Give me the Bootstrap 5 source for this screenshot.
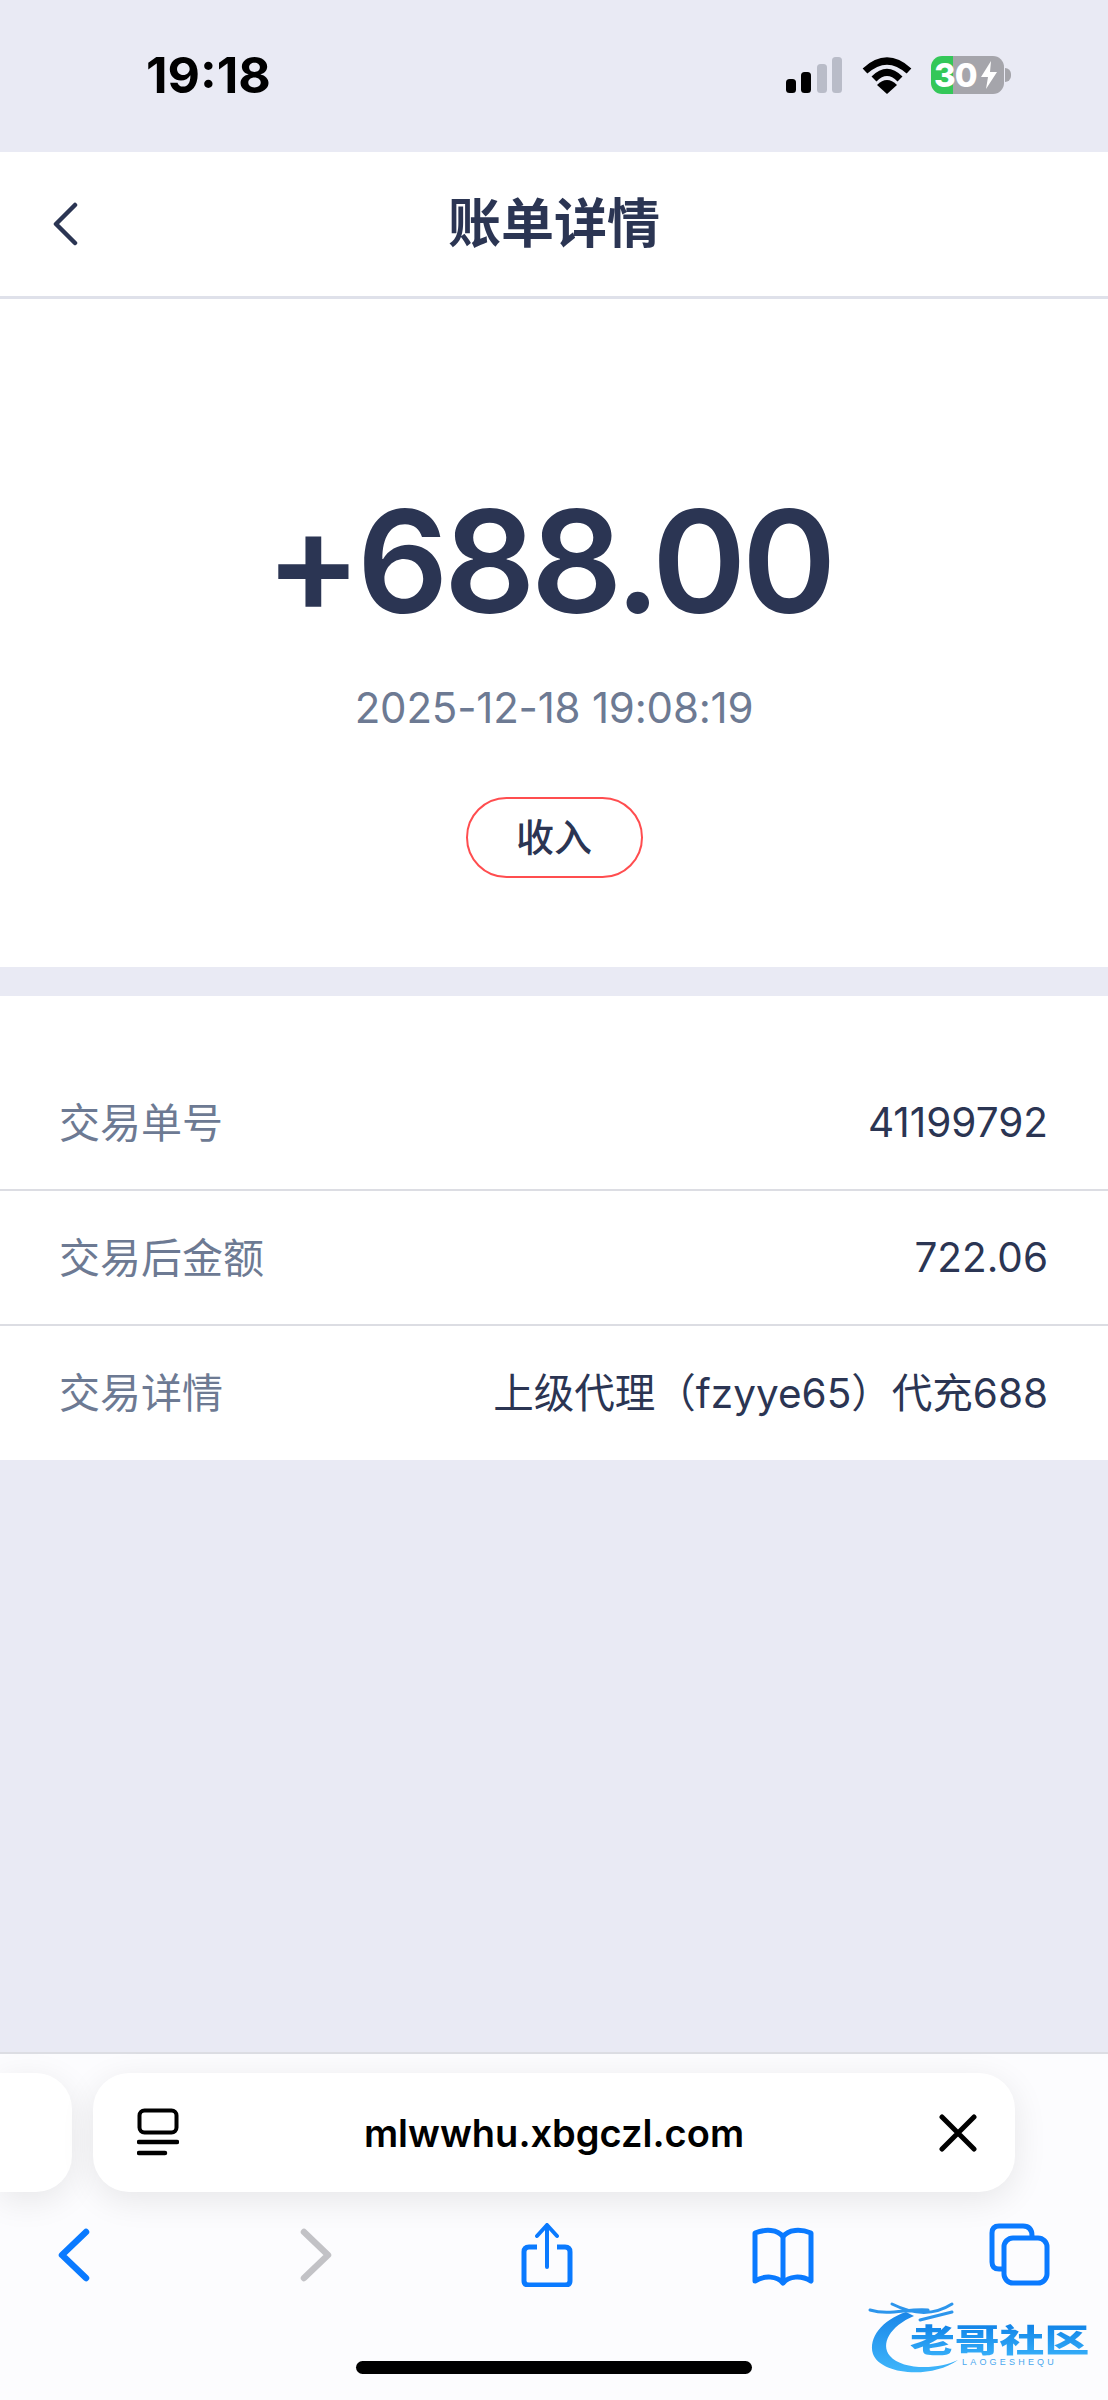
<!DOCTYPE html>
<html lang="zh-CN">
<head>
    <meta charset="UTF-8">
    <meta name="viewport" content="width=device-width, initial-scale=1">
    <title>账单详情</title>
    <link href="https://cdn.jsdelivr.net/npm/bootstrap@5.3.3/dist/css/bootstrap.min.css" rel="stylesheet">
    <style>
        body {
            font-family: Inter, "Noto Sans CJK SC", sans-serif;
            background: #e9eaf4;
            color: #2b3553;
            min-height: 2400px;
        }
        .status-bar { height: 152px; padding: 0 97px 0 146px; }
        .status-time { font-size: 50px; font-weight: 700; color: #000; line-height: 1; margin-top: -2px; }
        .status-icons { gap: 19px; margin-top: -2px; }
        .battery-wrap { width: 80px; height: 38px; }
        .battery-body {
            width: 73px; height: 38px; border-radius: 11px; color: #fff;
            background: linear-gradient(90deg, #34c759 0, #34c759 22px, #a5a5ab 22px);
            font-size: 33px; font-weight: 800; line-height: 38px; padding-left: 3px;
            font-family: Inter, sans-serif; letter-spacing: -1px;
        }
        .battery-nub { width: 6px; height: 14px; background: #a5a5ab; border-radius: 0 6px 6px 0; margin-left: 1px; }
        .page-head { height: 147px; border-bottom: 3px solid #dfe1ea; padding-left: 52px; }
        .page-title { font-size: 53px; font-weight: 700; line-height: 1; margin: 0; }
        .hero { height: 668px; padding-top: 190px; }
        .amount { font-size: 143px; font-weight: 630; line-height: 144px; letter-spacing: -4.5px; padding-right: 11px; }
        .pay-time { font-size: 42px; line-height: 50px; margin-top: 50px; color: #6d7a93; letter-spacing: -.2px; }
        .type-pill {
            width: 177px; height: 81px; margin-top: 64px; border: 2.5px solid #ff4d4f;
            border-radius: 41px; font-size: 38px; font-weight: 500;
        }
        .detail-box { margin-top: 29px; padding-top: 60px; }
        .detail-row { height: 135px; padding: 2px 60px 0 59px; border-bottom: 2px solid #dcdde3; font-size: 41px; }
        .detail-row:last-child { height: 134px; border-bottom: 0; }
        .detail-label { color: #6d7a93; }
        .detail-value { font-size: 40.5px; }
        .safari-bar { background: #fcfcfe; border-top: 2px solid #dcdde3; height: 348px; }
        .tab-strip { gap: 21px; padding-top: 19px; }
        .tab-side { width: 72px; height: 119px; background: #fff; border-radius: 0 36px 36px 0; box-shadow: 0 8px 34px rgba(0, 0, 0, .09); }
        .tab-main { width: 922px; height: 119px; background: #fff; border-radius: 36px; box-shadow: 0 8px 34px rgba(0, 0, 0, .09); padding: 0 38px 0 44px; }
        .tab-url { font-size: 38px; font-weight: 600; color: #000; white-space: nowrap; }
        .tool-row { padding: 31px 57px 0 42px; }
        .home-bar { width: 396px; height: 13px; background: #000; border-radius: 7px; margin: 74px auto 0; }
        .watermark { position: absolute; left: 860px; top: 2290px; width: 240px; height: 90px; }
        .watermark-cn {
            position: absolute; left: 50px; top: 31px; width: max-content; font-size: 32px; line-height: 40px; font-weight: 900;
            white-space: nowrap; transform: scaleX(1.4); transform-origin: left top;
            background: linear-gradient(180deg, #0d7fe6, #3bb4fb); -webkit-background-clip: text; background-clip: text; color: transparent;
        }
        .watermark-en { position: absolute; left: 102px; top: 67px; font-size: 9px; line-height: 10px; letter-spacing: 3.2px; color: #4aa8ee; font-family: "Liberation Sans", sans-serif; white-space: nowrap; }
    </style>
</head>
<body class="position-relative d-flex flex-column">
    <div class="status-bar d-flex justify-content-between align-items-center">
        <div class="status-time">19:18</div>
        <div class="status-icons d-flex align-items-center">
            <svg width="57" height="36" viewBox="0 0 57 36">
                <rect x="0" y="22" width="10" height="14" rx="3.5" fill="#000"/>
                <rect x="15" y="15" width="10" height="21" rx="3.5" fill="#000"/>
                <rect x="31" y="7" width="10" height="29" rx="3.5" fill="#b9bcc8"/>
                <rect x="46" y="0" width="10" height="36" rx="3.5" fill="#b9bcc8"/>
            </svg>
            <svg width="50" height="37" viewBox="0 0 50 37">
                <path d="M3 14 Q25 -6 47 14" fill="none" stroke="#000" stroke-width="7"/>
                <path d="M12 22 Q25 9 38 22" fill="none" stroke="#000" stroke-width="7"/>
                <path d="M15 28 Q25 18 35 28 L25 37 Z" fill="#000"/>
            </svg>
            <div class="battery-wrap d-flex align-items-center">
                <div class="battery-body d-flex align-items-center">
                    <span>30</span>
                    <svg class="ms-1" width="16" height="28" viewBox="0 0 16 28"><path d="M10 0 L0 16 H7 L5 28 L16 11 H9 Z" fill="#fff"/></svg>
                </div>
                <div class="battery-nub"></div>
            </div>
        </div>
    </div>

    <div class="page-head bg-white position-relative d-flex align-items-center">
        <svg width="26" height="44" viewBox="0 0 26 44"><path d="M23 3 L4 22 L23 41" fill="none" stroke="#2b3553" stroke-width="4.5" stroke-linecap="round" stroke-linejoin="round"/></svg>
        <h1 class="page-title position-absolute start-50 translate-middle-x">账单详情</h1>
    </div>

    <div class="hero bg-white d-flex flex-column align-items-center text-center">
        <div class="amount">+688.00</div>
        <div class="pay-time">2025-12-18 19:08:19</div>
        <div class="type-pill d-flex align-items-center justify-content-center">收入</div>
    </div>

    <div class="detail-box bg-white">
        <div class="detail-row d-flex justify-content-between align-items-center">
            <span class="detail-label">交易单号</span><span class="detail-value">41199792</span>
        </div>
        <div class="detail-row d-flex justify-content-between align-items-center">
            <span class="detail-label">交易后金额</span><span class="detail-value">722.06</span>
        </div>
        <div class="detail-row d-flex justify-content-between align-items-center">
            <span class="detail-label">交易详情</span><span class="detail-value">上级代理（fzyye65）代充688</span>
        </div>
    </div>

    <div class="flex-grow-1"></div>

    <div class="safari-bar">
        <div class="tab-strip d-flex">
            <div class="tab-side"></div>
            <div class="tab-main position-relative d-flex justify-content-between align-items-center">
                <svg width="42" height="50" viewBox="0 0 42 50">
                    <rect x="2.5" y="2.5" width="37" height="22" rx="5" fill="none" stroke="#000" stroke-width="4"/>
                    <path d="M2 34 H40 M2 45 H28" stroke="#000" stroke-width="4.5" stroke-linecap="round"/>
                </svg>
                <span class="tab-url position-absolute start-50 top-50 translate-middle">mlwwhu.xbgczl.com</span>
                <svg width="38" height="38" viewBox="0 0 38 38"><path d="M3 3 L35 35 M35 3 L3 35" stroke="#000" stroke-width="5" stroke-linecap="round"/></svg>
            </div>
        </div>
        <div class="tool-row d-flex justify-content-between align-items-start">
            <svg width="64" height="64" viewBox="0 0 64 64"><path d="M44 9 L20 32 L44 55" fill="none" stroke="#0a7aff" stroke-width="6.5" stroke-linecap="round" stroke-linejoin="round"/></svg>
            <svg width="64" height="64" viewBox="0 0 64 64"><path d="M26 9 L50 32 L26 55" fill="none" stroke="#c2c2c6" stroke-width="6.5" stroke-linecap="round" stroke-linejoin="round"/></svg>
            <svg width="64" height="64" viewBox="0 0 64 64">
                <path d="M22 24 H14 Q9 24 9 29 V58 Q9 62 14 62 H50 Q55 62 55 58 V29 Q55 24 50 24 H42" fill="none" stroke="#0a7aff" stroke-width="5"/>
                <path d="M32 44 V3 M22 13 L32 2 L42 13" fill="none" stroke="#0a7aff" stroke-width="4" stroke-linecap="round" stroke-linejoin="round"/>
            </svg>
            <svg width="64" height="64" viewBox="0 0 64 64">
                <path d="M32 14 C27 6 14 6 4 10 V58 C14 52 26 53 32 60 C38 53 50 52 60 58 V10 C50 6 37 6 32 14 Z M32 14 V58" fill="none" stroke="#0a7aff" stroke-width="5" stroke-linejoin="round"/>
            </svg>
            <svg width="64" height="64" viewBox="0 0 64 64">
                <path d="M16 46 H12 Q5 46 5 39 V10 Q5 3 12 3 H36 Q45 3 45 13" fill="none" stroke="#0a7aff" stroke-width="5"/>
                <rect x="17" y="15" width="43" height="45" rx="9" fill="none" stroke="#0a7aff" stroke-width="5"/>
            </svg>
        </div>
        <div class="home-bar"></div>
    </div>

    <div class="watermark">
        <svg class="position-absolute top-0 start-0" width="150" height="90" viewBox="0 0 150 90">
            <defs><linearGradient id="wmGrad" x1="0" y1="0" x2="0" y2="1"><stop offset="0" stop-color="#1a86e8"/><stop offset="1" stop-color="#3fb6fb"/></linearGradient></defs>
            <path d="M46 22 C22 30 8 48 13 64 C20 84 70 90 98 70 C78 80 42 80 30 66 C20 54 30 36 54 26 Z" fill="url(#wmGrad)"/>
            <path d="M10 20 C30 26 48 18 68 20 M32 14 C48 22 70 28 92 14 M60 30 L92 22" fill="none" stroke="#2c95ec" stroke-width="3" stroke-linecap="round"/>
        </svg>
        <div class="watermark-cn">老哥社区</div>
        <div class="watermark-en">LAOGESHEQU</div>
    </div>

    <script src="https://cdn.jsdelivr.net/npm/bootstrap@5.3.3/dist/js/bootstrap.bundle.min.js"></script>
</body>
</html>
